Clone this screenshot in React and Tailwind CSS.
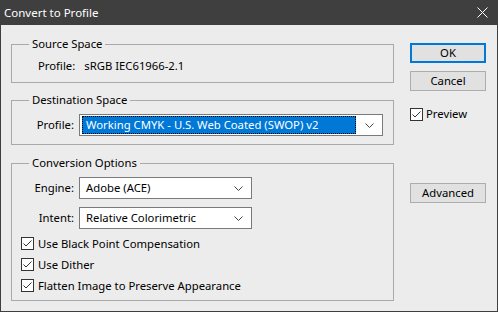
import React from "react";

function CheckBox() {
  return (
    <span className="flex h-[13px] w-[13px] shrink-0 items-center justify-center border border-[#333333] bg-white">
      <svg width="11" height="11" viewBox="0 0 11 11">
        <path d="M1.5 5.5 L4 8 L9.5 2.5" fill="none" stroke="#333333" strokeWidth="1" />
      </svg>
    </span>
  );
}

function Chevron() {
  return (
    <svg width="9" height="5" viewBox="0 0 9 5" className="shrink-0">
      <path d="M0.5 0.5 L4.5 4.5 L8.5 0.5" fill="none" stroke="#444444" strokeWidth="1" />
    </svg>
  );
}

function Select({ value, width, selected }) {
  return (
    <div className={`flex h-[22px] items-center border border-[#7a7a7a] bg-white pr-[8px] ${width}`}>
      {selected ? (
        <div className="ml-[2px] mr-[9px] flex h-[18px] flex-1 items-center border border-dotted border-[#000000] bg-[#0078d7] pl-[3px] text-white">
          {value}
        </div>
      ) : (
        <div className="flex-1 pl-[6px]">{value}</div>
      )}
      <Chevron />
    </div>
  );
}

function Group({ title, className, children }) {
  return (
    <fieldset className={`border border-[#a9a9a9] ${className}`}>
      <legend className="ml-[17px] px-[3px] leading-[16px]">{title}</legend>
      {children}
    </fieldset>
  );
}

function Row({ label, children }) {
  return (
    <div className="flex items-center">
      <span className="w-[67px] pr-[5px] text-right">{label}</span>
      {children}
    </div>
  );
}

function CheckRow({ label }) {
  return (
    <div className="flex h-[21px] items-center gap-[4px] pl-[9px]">
      <CheckBox />
      <span>{label}</span>
    </div>
  );
}

export default function App() {
  return (
    <div className="flex h-[312px] w-[498px] flex-col bg-[#3f3f3f] px-px pb-px font-['Noto_Sans',sans-serif] text-[11.3px] leading-[16px] text-black">
      {/* barra de título */}
      <div className="flex h-[25px] shrink-0 items-center justify-between pl-[3px] pr-[9px] text-[11.5px] text-white">
        <span>Convert to Profile</span>
        <svg width="11" height="11" viewBox="0 0 11 11">
          <path d="M0.5 0.5 L10.5 10.5 M10.5 0.5 L0.5 10.5" stroke="#ffffff" strokeWidth="1" />
        </svg>
      </div>

      <div className="flex flex-1 items-start bg-[#ececec]">
        <div className="ml-[10px] flex w-[383px] flex-col">
          <Group title="Source Space" className="mt-[11px]">
            <div className="pb-[8px] pl-[26px] pt-[6px]">
              Profile:<span className="ml-[9px]">sRGB IEC61966-2.1</span>
            </div>
          </Group>

          <Group title="Destination Space" className="mt-[9px]">
            <div className="pb-[8px] pt-[6px]">
              <Row label="Profile:">
                <Select
                  value="Working CMYK - U.S. Web Coated (SWOP) v2"
                  width="w-[304px]"
                  selected
                />
              </Row>
            </div>
          </Group>

          <Group title="Conversion Options" className="mt-[10px]">
            <div className="flex flex-col pb-[4px] pt-[6px]">
              <Row label="Engine:">
                <Select value="Adobe (ACE)" width="w-[173px]" />
              </Row>
              <div className="mt-[8px]">
                <Row label="Intent:">
                  <Select value="Relative Colorimetric" width="w-[173px]" />
                </Row>
              </div>
              <div className="mt-[4px]">
                <CheckRow label="Use Black Point Compensation" />
                <CheckRow label="Use Dither" />
                <CheckRow label="Flatten Image to Preserve Appearance" />
              </div>
            </div>
          </Group>
        </div>

        <div className="ml-[16px] mt-[18px] flex w-[76px] flex-col">
          <button className="h-[20px] border-2 border-[#0078d7] bg-[#e1e1e1] leading-[14px]">OK</button>
          <button className="mt-[8px] h-[20px] border border-[#adadad] bg-[#e1e1e1]">Cancel</button>
          <div className="mt-[15px] flex items-center gap-[3px]">
            <CheckBox />
            <span>Preview</span>
          </div>
          <button className="mt-[61px] h-[20px] border border-[#adadad] bg-[#e1e1e1]">Advanced</button>
        </div>
      </div>
    </div>
  );
}
